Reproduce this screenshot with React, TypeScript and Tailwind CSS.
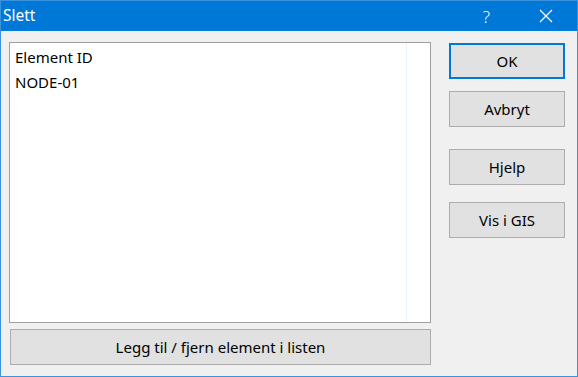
import React from "react";

const font = { fontFamily: '"Segoe UI", "Noto Sans", "Open Sans", sans-serif' };

function Btn({ label, primary, className = "" }: { label: string; primary?: boolean; className?: string }) {
  return (
    <button
      className={
        "h-[36px] w-[116px] bg-[#e1e1e1] text-[15px] text-black flex items-center justify-center " +
        (primary ? "border-2 border-[#0078d7] " : "border border-[#adadad] ") +
        className
      }
    >
      {label}
    </button>
  );
}

export default function App() {
  return (
    <div className="w-[578px] h-[377px] bg-[#f0f0f0] border border-[#3c93dd] flex flex-col overflow-hidden" style={font}>
      <div className="h-[30px] bg-[#0078d7] flex items-center text-white shrink-0">
        <span className="ml-[2px] text-[15.5px] leading-none">Slett</span>
        <div className="flex-1" />
        <span className="text-[17px] leading-none mr-[49px] font-light">?</span>
        <svg width="14" height="14" viewBox="0 0 14 14" className="mr-[24px]">
          <path d="M1 1 L13 13 M13 1 L1 13" stroke="white" strokeWidth="1.2" />
        </svg>
      </div>
      <div className="flex flex-1">
        <div className="flex flex-col ml-[8px] mt-[11px]">
          <div className="w-[422px] h-[281px] bg-white border border-[#a0a0a0] flex">
            <div className="flex-1 pl-[5px] pt-[2px] text-[15px] text-black">
              <div className="h-[25px] leading-[25px]">Element ID</div>
              <div className="h-[25px] leading-[25px]">NODE-01</div>
            </div>
            <div className="w-[1px] bg-[#eaf3fb] mr-[23px]" />
          </div>
          <button className="mt-[6px] ml-[1px] w-[421px] h-[36px] bg-[#e1e1e1] border border-[#adadad] text-[15px] text-black flex items-center justify-center">
            Legg til / fjern element i listen
          </button>
        </div>
        <div className="flex flex-col ml-[18px] mt-[12px]">
          <Btn label="OK" primary />
          <Btn label="Avbryt" className="mt-[12px]" />
          <Btn label="Hjelp" className="mt-[22px]" />
          <Btn label="Vis i GIS" className="mt-[17px]" />
        </div>
      </div>
    </div>
  );
}
